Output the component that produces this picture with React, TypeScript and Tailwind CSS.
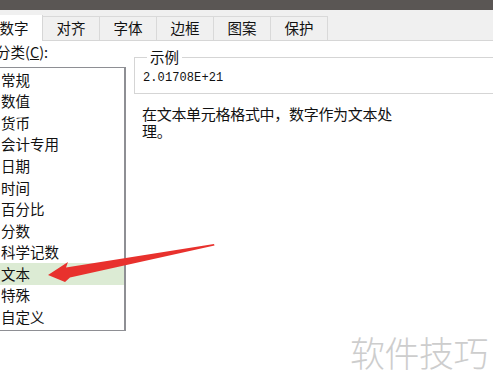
const tabs = ["对齐", "字体", "边框", "图案", "保护"];
const items = [
  "常规",
  "数值",
  "货币",
  "会计专用",
  "日期",
  "时间",
  "百分比",
  "分数",
  "科学记数",
  "文本",
  "特殊",
  "自定义",
];

const font = "font-['SimSun','Noto_Sans_CJK_SC',sans-serif]";

const App = () => {
  return (
    <div
      className={`relative w-[493px] h-[390px] overflow-hidden bg-white text-[#111] ${font}`}
    >
      <div className="h-[10px] bg-[#5a5654]" />

      {/* Tab strip */}
      <div className="h-[31px] bg-[#f0f0f0] border-b border-[#d6d6d6] flex items-end">
        <div className="-ml-[14px] w-[57px] h-[26px] bg-white border-r border-[#d6d6d6] flex items-center justify-center text-[14.5px] leading-none -mb-px relative">
          数字
        </div>
        {tabs.map((t) => (
          <div
            key={t}
            className="w-[57px] h-[24px] bg-[#f0f0f0] border-r border-t border-[#d9d9d9] flex items-center justify-center text-[14.5px] leading-none"
          >
            {t}
          </div>
        ))}
      </div>

      {/* Content */}
      <div className="flex">
        <div className="w-[130px] shrink-0 -ml-[4px]">
          <div className="h-[16px] mt-[3px] text-[14.5px] leading-[16px]">
            分类(<span className="underline">C</span>):
          </div>
          <div className="mt-[7px] h-[264px] border border-[#8e8f94] border-r-2 pt-[1px] pl-[4px]">
            {items.map((it) => (
              <div
                key={it}
                className={`h-[21.6px] flex items-center text-[14.5px] leading-none -ml-[4px] pl-[4px] ${
                  it === "文本" ? "bg-[#dcebd4]" : ""
                }`}
              >
                {it}
              </div>
            ))}
          </div>
        </div>

        <div className="flex-1 pl-[8px] pt-[8px]">
          <fieldset className="border border-[#d5d5d5] border-r-0 pl-[8px] pb-[8px] mr-[-2px] shadow-[inset_1px_1px_0_#fff]">
            <legend className="ml-[4px] px-[3px] text-[14.5px] leading-[16px]">
              示例
            </legend>
            <div className="font-['Liberation_Mono',monospace] text-[12px] leading-[14px] mt-[6px] tracking-[0.1px]">
              2.01708E+21
            </div>
          </fieldset>
          <p className="mt-[11px] pl-[8px] text-[15px] leading-[17px] tracking-[-0.3px] whitespace-nowrap">
            在文本单元格格式中，数字作为文本处
            <br />
            理。
          </p>
        </div>
      </div>

      {/* Red arrow annotation */}
      <svg
        className="absolute left-0 top-0 pointer-events-none"
        width="493"
        height="390"
      >
        <polygon
          points="48,275 68,262 66,267.5 214,244 214.5,245.5 70,277.5 65,282"
          fill="#e8312d"
        />
      </svg>

      {/* Watermark */}
      <div className="absolute left-[350px] top-[332px] text-[35px] leading-[40px] text-[#cdcdcd] font-['Noto_Sans_CJK_SC',sans-serif] font-light tracking-[-0.5px]">
        软件技巧
      </div>
    </div>
  );
};

export default App;
